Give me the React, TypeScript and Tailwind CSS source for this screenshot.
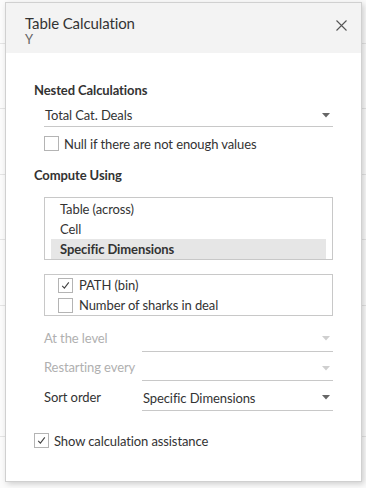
import React from "react";

const Caret = ({ light }: { light?: boolean }) => (
  <svg width="8" height="5" viewBox="0 0 8 5" className="shrink-0">
    <path d="M0 0 L8 0 L4 4.5 Z" fill={light ? "#cfcfcf" : "#666"} />
  </svg>
);

const Check = ({ checked }: { checked?: boolean }) => (
  <div className="w-[15px] h-[15px] border border-[#b4b4b4] bg-white shrink-0 flex items-center justify-center">
    {checked && (
      <svg width="11" height="11" viewBox="0 0 11 11">
        <path d="M2.2 5.8 L4.4 8.2 L8.8 2.4" fill="none" stroke="#444" strokeWidth="1.1" />
      </svg>
    )}
  </div>
);

const FieldRow = ({
  label,
  value,
  disabled,
}: {
  label: string;
  value?: string;
  disabled?: boolean;
}) => (
  <div className="flex items-end h-[29.5px]">
    <div
      className={`w-[98px] pb-[6px] ${disabled ? "text-[#b0b0b0]" : "text-[#333]"}`}
    >
      {label}
    </div>
    <div className="flex-1 flex items-center justify-between border-b border-[#c8c8c8] h-[24px] pb-[1px] pl-[1px] pr-[3px]">
      <span className="text-[#333]">{value ?? ""}</span>
      <Caret light={disabled} />
    </div>
  </div>
);

export default function App() {
  return (
    <div
      className="w-[366px] h-[488px] overflow-hidden bg-[#fbfbfb] pt-[2px] pl-[5px] text-[13px] leading-[16px] tracking-[-0.1px]"
      style={{
        fontFamily: "Lato, 'Liberation Sans', sans-serif",
        backgroundImage:
          "repeating-linear-gradient(to bottom, transparent 0px, transparent 43px, #e4e4e4 43px, #e4e4e4 44px, transparent 44px, transparent 65.5px)",
      }}
    >
      <div className="w-[357px] h-[480px] bg-white border border-[#d0d0d0] shadow-[2px_2px_6px_rgba(0,0,0,0.18)] flex flex-col">
        <div className="h-[50px] bg-[#f3f3f3] flex justify-between pl-[19px] pr-[14px] pt-[11px]">
          <div className="text-[#333]">
            <div className="text-[15px] leading-[18px]">Table Calculation</div>
            <div className="text-[13px] leading-[15px] text-[#666]">Y</div>
          </div>
          <svg width="11" height="11" viewBox="0 0 11 11" className="mt-[6px]">
            <path d="M0.5 0.5 L10.5 10.5 M10.5 0.5 L0.5 10.5" stroke="#555" strokeWidth="1.1" />
          </svg>
        </div>
        <div className="pl-[28px] pr-[28px] text-[#333]">
          <div className="mt-[29px] font-bold text-[13px]">Nested Calculations</div>
          <div className="ml-[10px] mt-[6px] h-[23px] flex items-center justify-between border-b border-[#c8c8c8] pl-[1px] pr-[3px]">
            <span>Total Cat. Deals</span>
            <Caret />
          </div>
          <div className="ml-[10px] mt-[9px] flex items-center gap-[5px] h-[15px]">
            <Check />
            <span>Null if there are not enough values</span>
          </div>
          <div className="mt-[16px] font-bold">Compute Using</div>
          <div className="ml-[10px] mt-[14px] border border-[#c8c8c8] pt-[1px] pl-[6px] pr-[6px]">
            <div className="h-[20px] flex items-center pl-[9px]">Table (across)</div>
            <div className="h-[20px] flex items-center pl-[9px]">Cell</div>
            <div className="h-[20px] flex items-center pl-[9px] bg-[#e6e6e6] font-bold">Specific Dimensions</div>
          </div>
          <div className="ml-[10px] mt-[14px] border border-[#c8c8c8] pl-[13px] h-[42px]">
            <div className="h-[20px] flex items-center gap-[6px]">
              <Check checked />
              <span>PATH (bin)</span>
            </div>
            <div className="h-[20px] flex items-center gap-[6px]">
              <Check />
              <span>Number of sharks in deal</span>
            </div>
          </div>
          <div className="ml-[10px] mt-[6px]">
            <FieldRow label="At the level" disabled />
            <FieldRow label="Restarting every" disabled />
            <FieldRow label="Sort order" value="Specific Dimensions" />
          </div>
          <div className="mt-[22px] flex items-center gap-[5px]">
            <Check checked />
            <span>Show calculation assistance</span>
          </div>
        </div>
      </div>
    </div>
  );
}
